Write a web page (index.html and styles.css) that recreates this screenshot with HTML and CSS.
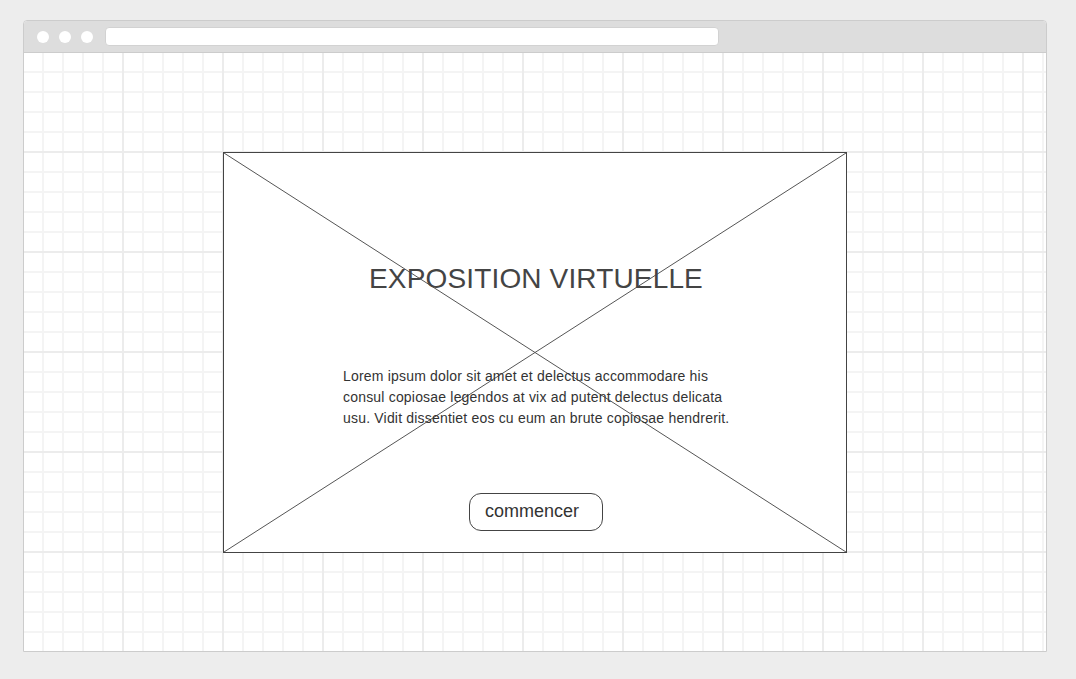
FILE: index.html
```html
<!DOCTYPE html>
<html lang="fr">
<head>
<meta charset="utf-8">
<title>Exposition virtuelle</title>
<link rel="stylesheet" href="styles.css">
</head>
<body>
<div class="window">
  <div class="chrome">
    <span class="dot"></span>
    <span class="dot"></span>
    <span class="dot"></span>
    <div class="address"></div>
  </div>
  <div class="canvas">
    <div class="hero">
      <svg class="cross" viewBox="0 0 100 100" preserveAspectRatio="none" aria-hidden="true">
        <line x1="0" y1="0" x2="100" y2="100" vector-effect="non-scaling-stroke"></line>
        <line x1="100" y1="0" x2="0" y2="100" vector-effect="non-scaling-stroke"></line>
      </svg>
      <h1 class="title">EXPOSITION VIRTUELLE</h1>
      <p class="text">Lorem ipsum dolor sit amet et delectus accommodare his consul copiosae legendos at vix ad putent delectus delicata usu. Vidit dissentiet eos cu eum an brute copiosae hendrerit.</p>
      <button class="start" type="button">commencer</button>
    </div>
  </div>
</div>
</body>
</html>
```

FILE: styles.css
```css
html, body {
  margin: 0;
  padding: 0;
}

body {
  background: #ededed;
  padding: 20px 0 0 23px;
  font-family: "Liberation Sans", Arial, sans-serif;
}

.window {
  width: 1024px;
  height: 632px;
  box-sizing: border-box;
  border: 1px solid #cccccc;
  border-radius: 4px 4px 0 0;
  background: #ffffff;
  display: flex;
  flex-direction: column;
  overflow: hidden;
}

.chrome {
  height: 31px;
  flex: none;
  background: #dddddd;
  border-bottom: 1px solid #cccccc;
  display: flex;
  align-items: center;
  padding-left: 13px;
  gap: 10px;
}

.dot {
  width: 12px;
  height: 12px;
  border-radius: 50%;
  background: #ffffff;
  flex: none;
}

.address {
  margin-left: 2px;
  width: 614px;
  height: 19px;
  box-sizing: border-box;
  background: #ffffff;
  border: 1px solid #d2d2d2;
  border-radius: 4px;
}

.canvas {
  flex: 1;
  display: flex;
  align-items: center;
  justify-content: center;
  background-color: #ffffff;
  background-image:
    linear-gradient(90deg, transparent 98px, #ececec 98px),
    linear-gradient(180deg, transparent 98px, #ececec 98px),
    linear-gradient(90deg, transparent 18px, #f4f4f4 18px),
    linear-gradient(180deg, transparent 18px, #f4f4f4 18px);
  background-size:
    100px 100%,
    100% 100px,
    20px 100%,
    100% 20px;
}

.hero {
  position: relative;
  width: 624px;
  height: 401px;
  box-sizing: border-box;
  border: 1px solid #444444;
  background: #ffffff;
  display: flex;
  flex-direction: column;
  align-items: center;
}

.cross {
  position: absolute;
  inset: 0;
  width: 100%;
  height: 100%;
  stroke: #555555;
  stroke-width: 1;
  pointer-events: none;
}

.title {
  position: relative;
  margin: 110px 0 0 2px;
  font-size: 28px;
  line-height: 32px;
  font-weight: normal;
  letter-spacing: 0.15px;
  color: #444444;
}

.text {
  position: relative;
  align-self: flex-start;
  margin: 71px 0 0 119px;
  width: 400px;
  font-size: 14px;
  line-height: 21px;
  letter-spacing: 0.19px;
  color: #333333;
}

.start {
  position: relative;
  align-self: flex-start;
  margin: auto 0 21px 245px;
  width: 134px;
  height: 38px;
  box-sizing: border-box;
  padding: 0 8px 0 0;
  border: 1px solid #444444;
  border-radius: 12px;
  background: #ffffff;
  font-family: "Liberation Sans", Arial, sans-serif;
  font-size: 18px;
  color: #333333;
}
```
